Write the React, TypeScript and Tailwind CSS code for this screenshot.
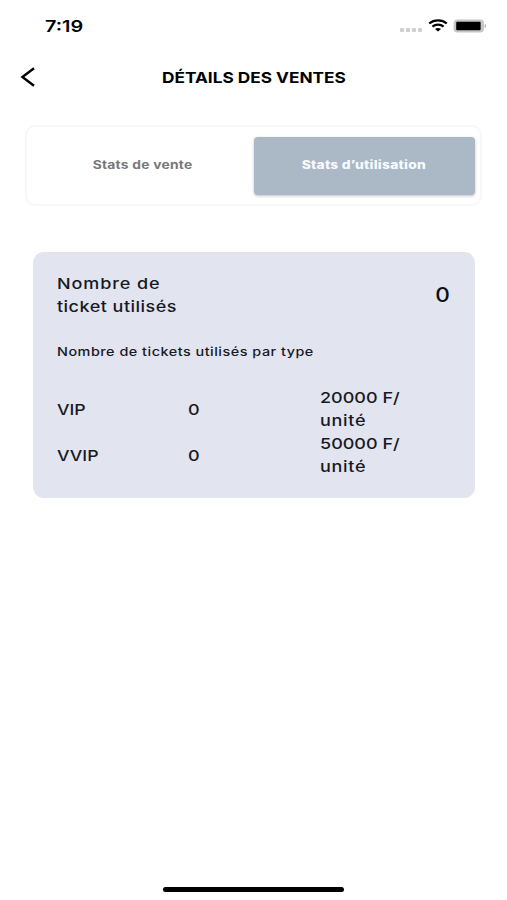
import React from "react";
import clsx from "clsx";

const tickets = [
  { type: "VIP", used: 0, price: 20000 },
  { type: "VVIP", used: 0, price: 50000 },
];

const StatusBar = () => {
  return (
    <div className="flex h-[51px] items-center justify-between pl-[45px] pr-5">
      <span className="origin-left scale-x-[1.24] text-[16px] font-semibold leading-none">
        7:19
      </span>
      <div className="flex items-center">
        <div className="mt-2 mr-[6px] flex gap-[2px]">
          {[0, 1, 2, 3].map((dot) => (
            <span key={dot} className="h-1 w-1 rounded-[1px] bg-[#cfcfcf]" />
          ))}
        </div>
        <svg width="20" height="13" viewBox="0 0 20 13" fill="none">
          <path d="M1.2 4.5C6 .4 14 .4 18.8 4.5" stroke="#000" strokeWidth="2.3" />
          <path d="M4.4 7.6C7.5 5 12.5 5 15.6 7.6" stroke="#000" strokeWidth="2.1" />
          <path d="M10 12.5 7 10c1.7-1.3 4.3-1.3 6 0z" fill="#000" />
        </svg>
        <svg className="ml-[5px]" width="34" height="14" viewBox="0 0 34 14">
          <rect x=".6" y=".4" width="30.4" height="13.2" rx="4" fill="#c6c6c6" />
          <rect x="3.2" y="2.8" width="24.4" height="8.4" rx="1" fill="#000" />
          <path d="M31.8 5c1.8.6 1.8 3.4 0 4z" fill="#aaa" />
        </svg>
      </div>
    </div>
  );
};

const Header = () => {
  return (
    <header className="relative flex h-[52px] items-center justify-center">
      <button className="absolute left-5 top-[16px]" title="Retour">
        <svg width="16" height="20" viewBox="0 0 16 20" fill="none">
          <path d="M14 1.2 2.4 10 14 18.8" stroke="#000" strokeWidth="2.4" />
        </svg>
      </button>
      <h1 className="scale-x-[1.15] whitespace-nowrap text-[15px] font-bold leading-none">
        DÉTAILS DES VENTES
      </h1>
    </header>
  );
};

const Tab = ({ title, active }: { title: string; active?: boolean }) => {
  return (
    <button
      className={clsx(
        "flex h-[58px] flex-1 items-center justify-center rounded-[4px]",
        active
          ? "bg-[#abb8c5] text-[#f7fbff] shadow-[0_1px_3px_rgba(0,0,0,0.25)]"
          : "text-[#777777]"
      )}
    >
      <span
        className={clsx(
          "scale-x-[1.2] whitespace-nowrap text-[11.5px] tracking-[0.2px]",
          active ? "font-extrabold" : "font-bold"
        )}
      >
        {title}
      </span>
    </button>
  );
};

const StatsCard = () => {
  return (
    <section className="mx-8 mt-[46px] ml-[33px] h-[246px] rounded-[11px] bg-[#e2e4f0] px-6 pt-5 text-[15px] font-medium leading-[23px] text-[#171923]">
      <div className="flex items-center justify-between">
        <p className="origin-left scale-x-[1.2]">
          <span className="tracking-[0.75px]">Nombre de</span>
          <br />
          <span className="tracking-[0.4px]">ticket utilisés</span>
        </p>
        <span className="mr-[2px] scale-x-[1.13] text-[20px] text-[#0c0e16]">0</span>
      </div>
      <p className="mt-[22px] w-fit origin-left scale-x-[1.2] whitespace-nowrap text-[12px] tracking-[0.42px]">
        Nombre de tickets utilisés par type
      </p>
      <div className="mt-[23px]">
        {tickets.map((ticket) => (
          <div key={ticket.type} className="grid grid-cols-3 items-center">
            <span className="origin-left scale-x-[1.18]">{ticket.type}</span>
            <span className="origin-left scale-x-[1.2]">{ticket.used}</span>
            <span className="origin-left scale-x-[1.2]">
              {ticket.price} F/
              <br />
              <span className="tracking-[0.6px]">unité</span>
            </span>
          </div>
        ))}
      </div>
    </section>
  );
};

export default function App() {
  return (
    <main className="flex h-[900px] w-[507px] flex-col overflow-hidden bg-white font-['Inter',sans-serif] text-black">
      <StatusBar />
      <Header />
      <div className="mx-[25px] mt-[22px] flex h-[81px] rounded-[10px] border-2 border-[#f7f7f7] px-[5px] pt-[10px]">
        <Tab title="Stats de vente" />
        <Tab title="Stats d’utilisation" active />
      </div>
      <StatsCard />
      <div className="mx-auto mt-auto mb-2 h-[5px] w-[181px] rounded-full bg-black" />
    </main>
  );
}
